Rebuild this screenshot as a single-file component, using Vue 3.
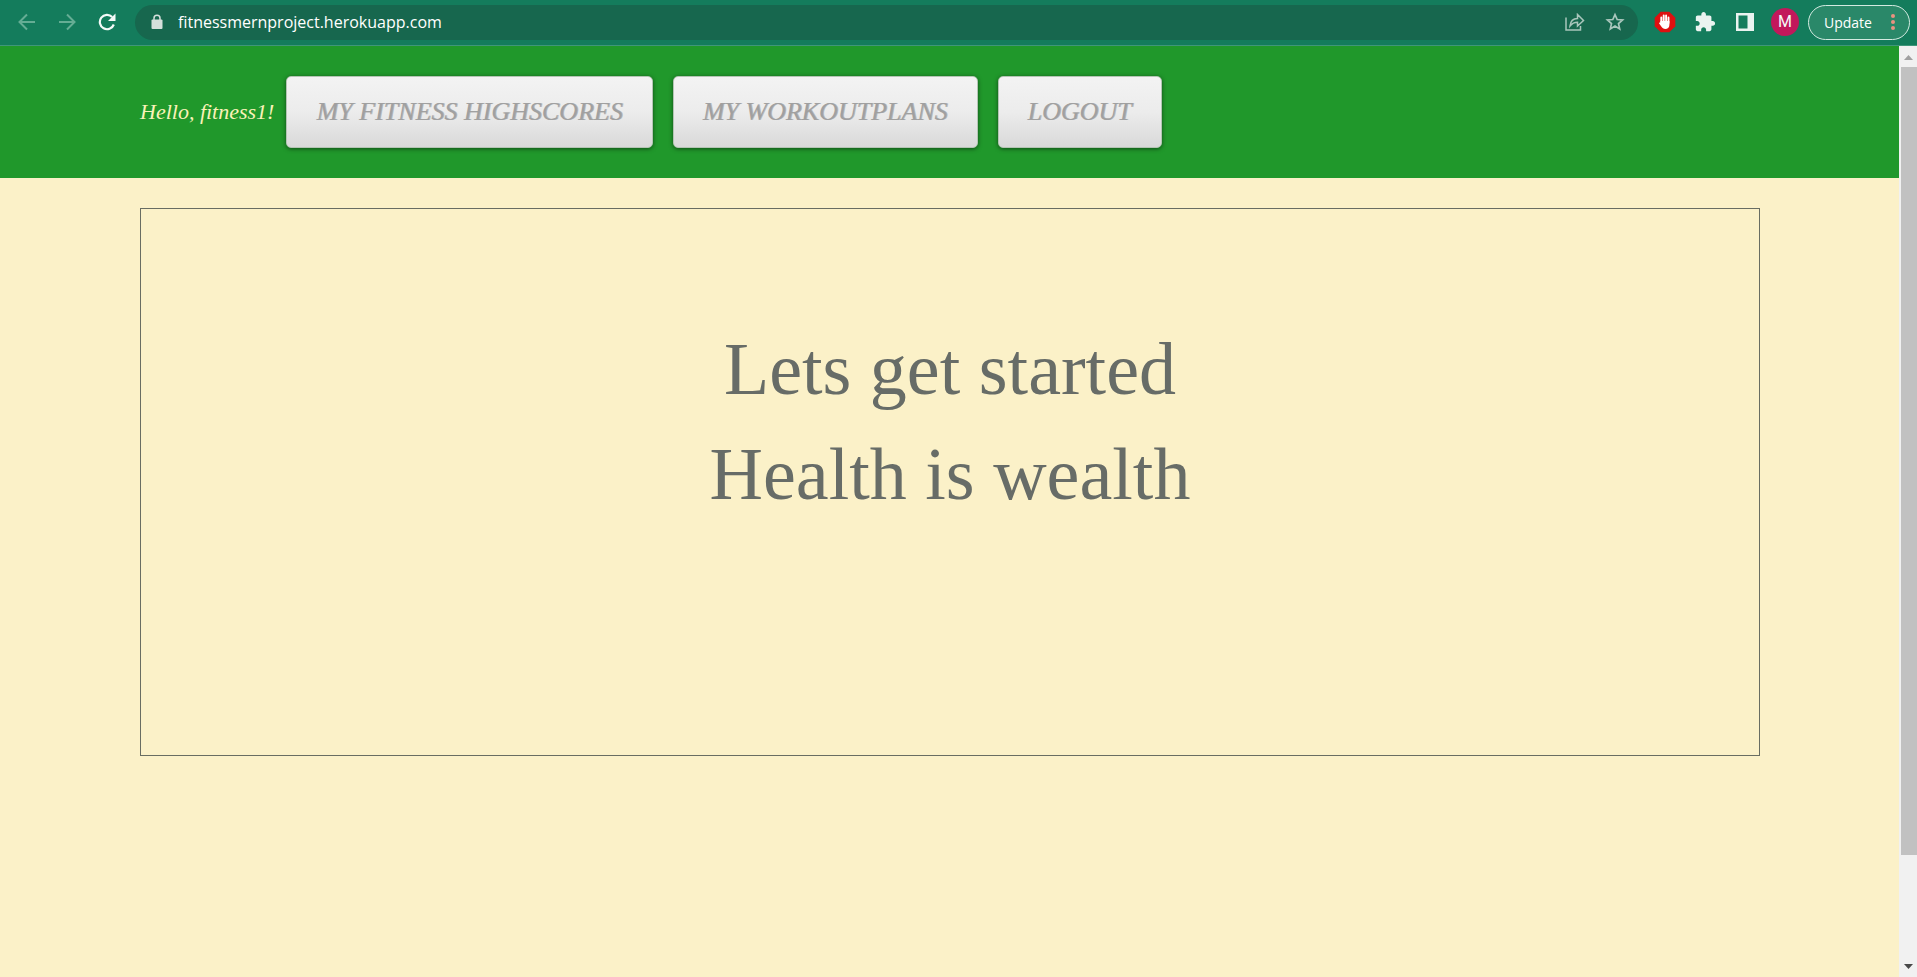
<script setup>
const links = ['My Fitness Highscores', 'My Workoutplans', 'Logout']
</script>

<template>
  <div class="window">
    <div class="toolbar">
      <button class="tool faded" aria-label="Back">
        <svg width="18" height="18" viewBox="0 0 18 18" fill="none" stroke="currentColor" stroke-width="2"><path d="M17 9H2M9 1.500L1.500 9L9 16.500" /></svg>
      </button>
      <button class="tool faded" aria-label="Forward">
        <svg width="18" height="18" viewBox="0 0 18 18" fill="none" stroke="currentColor" stroke-width="2"><path d="M1 9H16M9 1.500L16.500 9L9 16.500" /></svg>
      </button>
      <button class="tool" aria-label="Reload">
        <svg width="18" height="18" viewBox="0 0 18 18"><path d="M15.800 11.500A7.200 7.200 0 1 1 14.200 4" fill="none" stroke="currentColor" stroke-width="2.200" /><path d="M17.500 0.500V8H10Z" fill="currentColor" /></svg>
      </button>
      <div class="omnibox">
        <svg class="lock" width="12" height="16" viewBox="0 0 12 16"><rect x="0.500" y="5.500" width="11" height="9.500" rx="1" fill="#d5dfdb" /><path d="M3 6.500V4.200a3 3 0 0 1 6 0V6.500" fill="none" stroke="#d5dfdb" stroke-width="1.500" /></svg>
        <input class="url" type="text" aria-label="Address" value="fitnessmernproject.herokuapp.com" />
        <button class="tool soft" aria-label="Share">
          <svg width="20" height="18" viewBox="0 0 20 18" fill="none" stroke="currentColor" stroke-width="1.500"><path d="M1 4.500V17H15.500V13M5 13C5.500 8 8.500 5.500 12.500 5.500V1.500L18.500 7.500L12.500 13V9.300C9 9.300 7 10.500 5 13Z" /></svg>
        </button>
        <button class="tool soft" aria-label="Bookmark">
          <svg width="20" height="20" viewBox="0 0 20 20" fill="none" stroke="currentColor" stroke-width="1.700"><path d="M10 2.600L12.200 7.500L17.600 8L13.500 11.600L14.700 16.900L10 14.100L5.300 16.900L6.500 11.600L2.400 8L7.800 7.500Z" /></svg>
        </button>
      </div>
      <button class="tool" aria-label="Ad blocker">
        <svg width="22" height="22" viewBox="0 0 22 22"><path d="M6.700 0.700H15.300L21.300 6.700V15.300L15.300 21.300H6.700L0.700 15.300V6.700Z" fill="#df1010" /><path d="M7.300 12V6.500M9.700 11V4.500M12.100 11V4.500M14.500 12V6.500" stroke="#fff" stroke-width="1.900" stroke-linecap="round" /><path d="M6.400 10H15.400V14C15.400 16.500 13.500 18 11.300 18C9.500 18 8.300 17 7.300 15.500L5 12.200C5 11.300 5.900 11.200 6.400 11.800Z" fill="#fff" /></svg>
      </button>
      <button class="tool" aria-label="Extensions">
        <svg width="22" height="22" viewBox="0 0 24 24" fill="#eaf3f0"><path d="M20.500 11H19V7c0-1.100-.9-2-2-2h-4V3.500C13 2.120 11.880 1 10.500 1S8 2.120 8 3.500V5H4c-1.100 0-1.990.9-1.990 2v3.800H3.500c1.490 0 2.700 1.210 2.700 2.700s-1.210 2.700-2.700 2.700H2V20c0 1.100.9 2 2 2h3.800v-1.500c0-1.490 1.210-2.700 2.700-2.700s2.700 1.210 2.700 2.700V22H17c1.100 0 2-.9 2-2v-4h1.500c1.380 0 2.500-1.120 2.500-2.500S21.880 11 20.500 11z" /></svg>
      </button>
      <button class="tool" aria-label="Side panel">
        <svg width="18" height="18" viewBox="0 0 18 18"><path fill-rule="evenodd" d="M0 0H18V18H0ZM2.500 2.500V15.500H11.500V2.500Z" fill="#eaf3f0" /></svg>
      </button>
      <button class="tool" aria-label="Profile"><span class="avatar">M</span></button>
      <button class="update">
        Update
        <svg width="4" height="16" viewBox="0 0 4 16" fill="#ea9280"><circle cx="2" cy="2" r="2" /><circle cx="2" cy="8" r="2" /><circle cx="2" cy="14" r="2" /></svg>
      </button>
    </div>

    <div class="viewport">
      <div class="page">
        <header class="banner">
          <span class="hello">Hello, fitness1!</span>
          <nav class="links">
            <a v-for="link in links" :key="link" class="btn" href="#">{{ link }}</a>
          </nav>
        </header>
        <main class="content">
          <section class="hero">
            <h1>Lets get started</h1>
            <h1>Health is wealth</h1>
          </section>
        </main>
      </div>
      <div class="scrollbar">
        <svg width="18" height="21" viewBox="0 0 18 21"><path d="M5 14L9.500 9L14 14Z" fill="#a0a0a0" /></svg>
        <div class="track"><div class="thumb"></div></div>
        <svg width="18" height="21" viewBox="0 0 18 21"><path d="M5 8L9.500 13L14 8Z" fill="#484848" /></svg>
      </div>
    </div>
  </div>
</template>

<style>
body {
  background: #fbf1c8;
}
</style>

<style scoped>
.window {
  display: flex;
  flex-direction: column;
  height: 100vh;
  font-family: "Liberation Serif", "Times New Roman", serif;
}
button {
  border: 0;
  background: none;
  padding: 0;
  color: inherit;
}
.toolbar {
  display: flex;
  align-items: center;
  box-sizing: border-box;
  height: 46px;
  padding: 0 7px 1px;
  background: #147c5c;
  border-bottom: 1px solid #3f967a;
  color: #f4faf8;
  font-family: "Open Sans", "Segoe UI", sans-serif;
}
.tool {
  display: flex;
  align-items: center;
  justify-content: center;
  width: 40px;
  height: 34px;
}
.faded {
  color: #65ad94;
}
.soft {
  color: #a9c6bc;
}
.omnibox {
  display: flex;
  flex: 1;
  align-items: center;
  height: 35px;
  margin: 0 7px 0 8px;
  padding: 0 3px 0 16px;
  border-radius: 18px;
  background: #17674e;
}
.url {
  flex: 1;
  min-width: 0;
  margin-left: 15px;
  padding: 0;
  border: 0;
  outline: 0;
  background: none;
  color: #fff;
  font-family: "Open Sans", "Segoe UI", sans-serif;
  font-size: 16px;
}
.avatar {
  width: 28px;
  border-radius: 50%;
  background: #c2185b;
  font-family: Roboto, sans-serif;
  font-size: 16px;
  line-height: 28px;
  text-align: center;
}
.update {
  display: flex;
  align-items: center;
  justify-content: space-between;
  box-sizing: border-box;
  width: 102px;
  height: 35px;
  margin-left: 3px;
  padding: 0 14px 0 15px;
  border: 1px solid #d3eae1;
  border-radius: 18px;
  background: #2a8869;
  color: #fff;
  font-family: "Open Sans", "Segoe UI", sans-serif;
  font-size: 14px;
}
.viewport {
  display: flex;
  flex: 1;
  min-height: 0;
}
.page {
  flex: 1;
  overflow: hidden;
  background: #fbf1c8;
}
.banner {
  display: flex;
  align-items: center;
  gap: 12px;
  padding: 30px 140px;
  background: #20982b;
}
.hello {
  color: #faf2b8;
  font-size: 22px;
  font-style: italic;
  white-space: nowrap;
}
.links {
  display: flex;
  gap: 20px;
}
.btn {
  padding: 0 29px;
  border: 1px solid #b4c4b4;
  border-radius: 5px;
  background: linear-gradient(#f3f3f3, #ececec 50%, #d9d9d9);
  box-shadow: 0 1px 4px rgba(0, 0, 0, 0.5);
  color: #a0a0a0;
  font-size: 26px;
  font-style: italic;
  line-height: 70px;
  text-decoration: none;
  text-shadow: 1px 0 0 #b8b8b8;
  text-transform: uppercase;
  white-space: nowrap;
}
.content {
  padding: 30px 139px 30px 140px;
}
.hero {
  box-sizing: border-box;
  min-height: 548px;
  padding: 108px 20px;
  border: 1px solid #686d62;
  text-align: center;
}
h1 {
  margin: 0;
  color: #676c67;
  font-size: 74px;
  font-weight: 400;
  line-height: 105px;
}
.scrollbar {
  display: flex;
  flex-direction: column;
  width: 18px;
  background: #f1f1f1;
}
.track {
  flex: 1;
}
.thumb {
  height: 88.600%;
  margin-left: 2px;
  background: #c1c1c1;
}
</style>
